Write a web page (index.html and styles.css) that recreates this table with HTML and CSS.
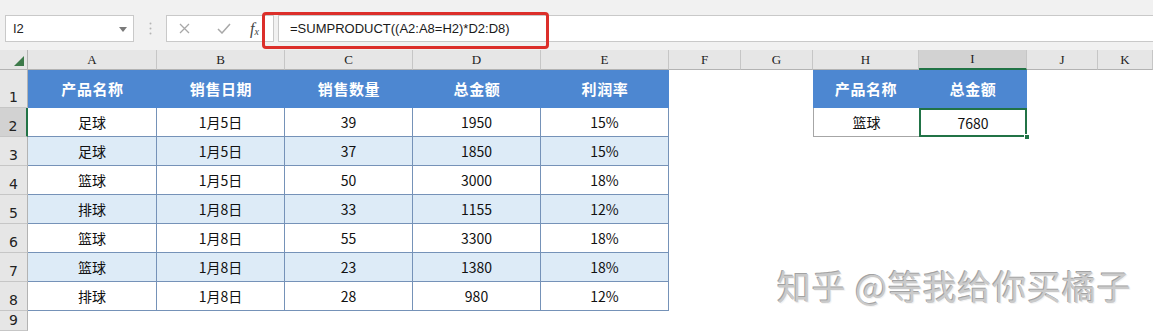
FILE: index.html
```html
<!DOCTYPE html>
<html lang="zh">
<head>
<meta charset="utf-8">
<title>SUMPRODUCT</title>
<link rel="stylesheet" href="styles.css">
</head>
<body>
<div class="app">
  <div class="fbar">
    <div class="namebox"><span>I2</span><svg class="caret" width="8" height="5" viewBox="0 0 8 5"><path d="M0 0H8L4 5Z" fill="#7a7a7a"/></svg></div>
    <div class="dots"><svg width="3" height="13" viewBox="0 0 3 13"><circle cx="1.5" cy="1.5" r="1" fill="#b5b5b5"/><circle cx="1.5" cy="6.5" r="1" fill="#b5b5b5"/><circle cx="1.5" cy="11.5" r="1" fill="#b5b5b5"/></svg></div>
    <div class="btns">
      <svg class="ico x" width="11" height="11" viewBox="0 0 11 11"><path d="M1 1L10 10M10 1L1 10" stroke="#a8a8a8" stroke-width="1.3" fill="none"/></svg>
      <svg class="ico ok" width="14" height="11" viewBox="0 0 14 11"><path d="M1 6L5 10L13 1" stroke="#a8a8a8" stroke-width="1.5" fill="none"/></svg>
      <span class="fx">f<sub>x</sub></span>
    </div>
    <div class="formula">=SUMPRODUCT((A2:A8=H2)*D2:D8)</div>
    <div class="redbox"></div>
  </div>

  <div class="sheet">
    <div class="row rh">
      <div class="corner"><svg class="tri" width="10" height="10" viewBox="0 0 10 10"><path d="M10 0V10H0Z" fill="#3d7a4a"/></svg></div>
      <div class="ch">A</div><div class="ch">B</div><div class="ch">C</div><div class="ch">D</div><div class="ch">E</div>
      <div class="ch">F</div><div class="ch">G</div><div class="ch">H</div><div class="ch sel">I</div><div class="ch">J</div><div class="ch">K</div>
    </div>

    <div class="row r1">
      <div class="rn">1</div>
      <div class="c th">产品名称</div><div class="c th">销售日期</div><div class="c th">销售数量</div><div class="c th">总金额</div><div class="c th">利润率</div>
      <div class="c"></div><div class="c"></div>
      <div class="c th">产品名称</div><div class="c th">总金额</div>
      <div class="c"></div><div class="c"></div>
    </div>

    <div class="row rd">
      <div class="rn sel">2</div>
      <div class="c td">足球</div><div class="c td">1月5日</div><div class="c td">39</div><div class="c td">1950</div><div class="c td">15%</div>
      <div class="c"></div><div class="c"></div>
      <div class="c sd first">篮球</div><div class="c sd active">7680<span class="handle"></span></div>
      <div class="c"></div><div class="c"></div>
    </div>

    <div class="row rd">
      <div class="rn">3</div>
      <div class="c td z">足球</div><div class="c td z">1月5日</div><div class="c td z">37</div><div class="c td z">1850</div><div class="c td z">15%</div>
      <div class="c"></div><div class="c"></div><div class="c"></div><div class="c"></div><div class="c"></div><div class="c"></div>
    </div>

    <div class="row rd">
      <div class="rn">4</div>
      <div class="c td">篮球</div><div class="c td">1月5日</div><div class="c td">50</div><div class="c td">3000</div><div class="c td">18%</div>
      <div class="c"></div><div class="c"></div><div class="c"></div><div class="c"></div><div class="c"></div><div class="c"></div>
    </div>

    <div class="row rd">
      <div class="rn">5</div>
      <div class="c td z">排球</div><div class="c td z">1月8日</div><div class="c td z">33</div><div class="c td z">1155</div><div class="c td z">12%</div>
      <div class="c"></div><div class="c"></div><div class="c"></div><div class="c"></div><div class="c"></div><div class="c"></div>
    </div>

    <div class="row rd">
      <div class="rn">6</div>
      <div class="c td">篮球</div><div class="c td">1月8日</div><div class="c td">55</div><div class="c td">3300</div><div class="c td">18%</div>
      <div class="c"></div><div class="c"></div><div class="c"></div><div class="c"></div><div class="c"></div><div class="c"></div>
    </div>

    <div class="row rd">
      <div class="rn">7</div>
      <div class="c td z">篮球</div><div class="c td z">1月8日</div><div class="c td z">23</div><div class="c td z">1380</div><div class="c td z">18%</div>
      <div class="c"></div><div class="c"></div><div class="c"></div><div class="c"></div><div class="c"></div><div class="c"></div>
    </div>

    <div class="row rd">
      <div class="rn">8</div>
      <div class="c td">排球</div><div class="c td">1月8日</div><div class="c td">28</div><div class="c td">980</div><div class="c td">12%</div>
      <div class="c"></div><div class="c"></div><div class="c"></div><div class="c"></div><div class="c"></div><div class="c"></div>
    </div>

    <div class="row r9">
      <div class="rn">9</div>
      <div class="c"></div><div class="c"></div><div class="c"></div><div class="c"></div><div class="c"></div>
      <div class="c"></div><div class="c"></div><div class="c"></div><div class="c"></div><div class="c"></div><div class="c"></div>
    </div>
  </div>

  <div class="watermark">知乎 @等我给你买橘子</div>
</div>
</body>
</html>
```

FILE: styles.css
```css
* { box-sizing: border-box; }
html, body { margin: 0; padding: 0; }
body {
  width: 1153px;
  height: 331px;
  overflow: hidden;
  background: #ffffff;
  font-family: "Noto Sans CJK SC", "Liberation Sans", sans-serif;
}
.app {
  position: relative;
  width: 1153px;
  height: 331px;
  overflow: hidden;
}

/* formula bar */
.fbar {
  position: relative;
  height: 50px;
  background: #f1f1f1;
  display: flex;
  align-items: flex-start;
  padding-top: 15px;
  padding-left: 5px;
}
.namebox {
  width: 129px;
  height: 27px;
  background: #fff;
  border: 1px solid #c9c9c9;
  display: flex;
  align-items: center;
  justify-content: space-between;
  padding: 0 6px 0 7px;
  font-family: "Liberation Sans", sans-serif;
  font-size: 13px;
  color: #222;
}
.namebox .caret { margin-top: 1px; }
.dots {
  width: 32px;
  height: 27px;
  display: flex;
  align-items: center;
  justify-content: center;
}
.btns {
  width: 108px;
  height: 27px;
  background: #fff;
  border: 1px solid #c9c9c9;
  display: flex;
  align-items: center;
  padding-left: 12px;
}
.btns .x { margin-right: 27px; }
.btns .ok { margin-right: 19px; }
.fx {
  font-family: "Liberation Serif", serif;
  font-style: italic;
  font-size: 16px;
  color: #444;
  line-height: 1;
}
.fx sub { font-size: 10px; vertical-align: -1px; }
.formula {
  flex: 1;
  margin-left: 4px;
  margin-right: -4px;
  height: 27px;
  background: #fff;
  border: 1px solid #c9c9c9;
  display: flex;
  align-items: center;
  padding-left: 11px;
  font-family: "Liberation Sans", sans-serif;
  font-size: 13px;
  color: #1a1a1a;
}
.redbox {
  position: absolute;
  left: 262px;
  top: 12px;
  width: 287px;
  height: 37px;
  border: 3px solid #dc2f2a;
  border-radius: 4px;
}

/* sheet */
.sheet { display: flex; flex-direction: column; }
.row {
  display: grid;
  grid-template-columns: 28px 129px 128px 128px 128px 128px 72px 72px 106px 108px 71px 1fr;
}
.rh { height: 20px; }
.r1 { height: 38px; }
.rd { height: 29px; }
.r9 { height: 20px; }

.corner {
  background: #e6e6e6;
  border-right: 1px solid #b3b3b3;
  border-bottom: 1px solid #b3b3b3;
  display: flex;
  align-items: flex-end;
  justify-content: flex-end;
  padding: 0 3px 3px 0;
}
.ch {
  background: #e6e6e6;
  border-right: 1px solid #c6c6c6;
  border-bottom: 1px solid #b3b3b3;
  display: flex;
  align-items: center;
  justify-content: center;
  font-family: "Liberation Serif", serif;
  font-size: 13px;
  color: #222;
}
.ch.sel {
  background: #d2d2d2;
  border-bottom: 2px solid #217346;
}
.rn {
  background: #e6e6e6;
  border-right: 1px solid #b3b3b3;
  border-bottom: 1px solid #c6c6c6;
  display: flex;
  align-items: flex-end;
  justify-content: center;
  padding-bottom: 1px;
  font-family: "DejaVu Sans", sans-serif;
  font-size: 14px;
  line-height: 17px;
  color: #222;
}
.rn.sel {
  background: #d2d2d2;
  border-right: 2px solid #217346;
}

.c {
  display: flex;
  align-items: center;
  justify-content: center;
  background: #fff;
  font-size: 14px;
  line-height: 18px;
  color: #111;
}
.th {
  background: #4d87d1;
  color: #fff;
  font-weight: 700;
  font-size: 15px;
  letter-spacing: 0.6px;
}
.td {
  border-right: 1px solid #7592b8;
  border-bottom: 1px solid #7592b8;
}
.td.z { background: #ddebf7; }
.sd {
  border-bottom: 1px solid #a6a6a6;
}
.sd.first { border-left: 1px solid #a6a6a6; }
.sd.active {
  position: relative;
  box-shadow: inset 0 0 0 2px #217346;
  border-bottom: none;
}
.handle {
  position: absolute;
  right: -3px;
  bottom: -3px;
  width: 6px;
  height: 6px;
  background: #217346;
  border: 1px solid #fff;
}

/* watermark */
.watermark {
  position: absolute;
  left: 777px;
  top: 263px;
  font-family: "Noto Sans CJK SC", sans-serif;
  font-size: 34px;
  line-height: 46px;
  color: #cacaca;
  letter-spacing: 0.8px;
  text-shadow: -1px -1px 0 #a2a2a2, 1px 1px 0 #f4f4f4;
  white-space: nowrap;
}
```
